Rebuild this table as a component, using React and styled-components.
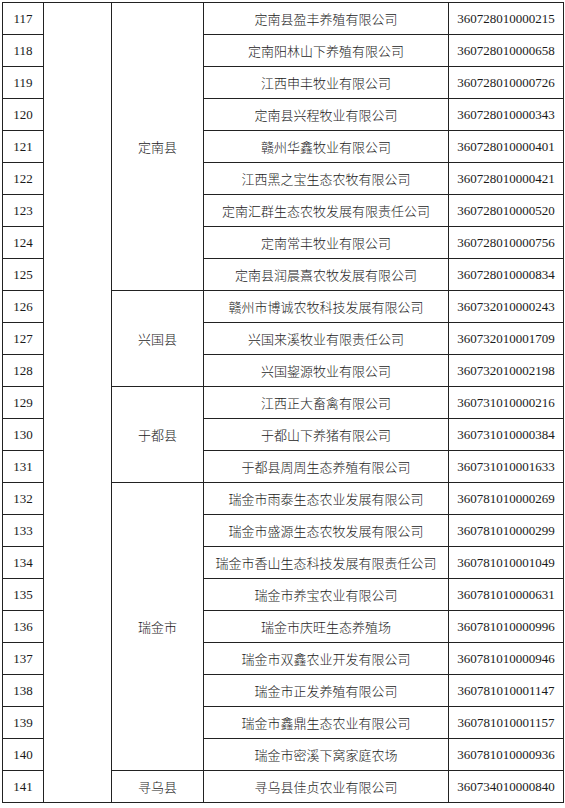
import React from "react";
import styled, { createGlobalStyle } from "styled-components";

const GlobalStyle = createGlobalStyle`
  body {
    margin: 0;
    background: #fff;
  }
`;

const Page = styled.div`
  padding: 2px 0 0 2px;
`;

const Table = styled.table`
  border-collapse: collapse;
  table-layout: fixed;
  width: 561px;
  font-size: 13px;
  color: #1a1a1a;
`;

const Col = styled.col`
  width: ${(p) => p.$w}px;
`;

const Cell = styled.td`
  border: 1px solid #222;
  height: 31px;
  padding: 0;
  text-align: center;
  vertical-align: middle;
  white-space: nowrap;
  font-family: ${(p) =>
    p.$cjk ? '"Noto Sans CJK SC", sans-serif' : '"Liberation Serif", serif'};
  font-weight: ${(p) => (p.$cjk ? 300 : 400)};
`;

const colWidths = [41, 68, 92, 245, 115];

const groups = [
  {
    county: "定南县",
    rows: [
      ["定南县盈丰养殖有限公司", "360728010000215"],
      ["定南阳林山下养殖有限公司", "360728010000658"],
      ["江西申丰牧业有限公司", "360728010000726"],
      ["定南县兴程牧业有限公司", "360728010000343"],
      ["赣州华鑫牧业有限公司", "360728010000401"],
      ["江西黑之宝生态农牧有限公司", "360728010000421"],
      ["定南汇群生态农牧发展有限责任公司", "360728010000520"],
      ["定南常丰牧业有限公司", "360728010000756"],
      ["定南县润晨熹农牧发展有限公司", "360728010000834"],
    ],
  },
  {
    county: "兴国县",
    rows: [
      ["赣州市博诚农牧科技发展有限公司", "360732010000243"],
      ["兴国来溪牧业有限责任公司", "360732010001709"],
      ["兴国鋆源牧业有限公司", "360732010002198"],
    ],
  },
  {
    county: "于都县",
    rows: [
      ["江西正大畜禽有限公司", "360731010000216"],
      ["于都山下养猪有限公司", "360731010000384"],
      ["于都县周周生态养殖有限公司", "360731010001633"],
    ],
  },
  {
    county: "瑞金市",
    rows: [
      ["瑞金市雨泰生态农业发展有限公司", "360781010000269"],
      ["瑞金市盛源生态农牧发展有限公司", "360781010000299"],
      ["瑞金市香山生态科技发展有限责任公司", "360781010001049"],
      ["瑞金市养宝农业有限公司", "360781010000631"],
      ["瑞金市庆旺生态养殖场", "360781010000996"],
      ["瑞金市双鑫农业开发有限公司", "360781010000946"],
      ["瑞金市正发养殖有限公司", "360781010001147"],
      ["瑞金市鑫鼎生态农业有限公司", "360781010001157"],
      ["瑞金市密溪下窝家庭农场", "360781010000936"],
    ],
  },
  {
    county: "寻乌县",
    rows: [["寻乌县佳贞农业有限公司", "360734010000840"]],
  },
];

const total = groups.reduce((n, g) => n + g.rows.length, 0);

export default function App() {
  let no = 117;
  let first = true;
  return (
    <Page>
      <GlobalStyle />
      <Table>
        <colgroup>
          {colWidths.map((w, i) => (
            <Col key={i} $w={w} />
          ))}
        </colgroup>
        <tbody>
          {groups.map((g) =>
            g.rows.map(([name, code], i) => {
              const n = no++;
              const showCity = first;
              first = false;
              return (
                <tr key={n}>
                  <Cell>{n}</Cell>
                  {showCity && <Cell rowSpan={total} />}
                  {i === 0 && (
                    <Cell $cjk rowSpan={g.rows.length}>
                      {g.county}
                    </Cell>
                  )}
                  <Cell $cjk>{name}</Cell>
                  <Cell>{code}</Cell>
                </tr>
              );
            })
          )}
        </tbody>
      </Table>
    </Page>
  );
}
